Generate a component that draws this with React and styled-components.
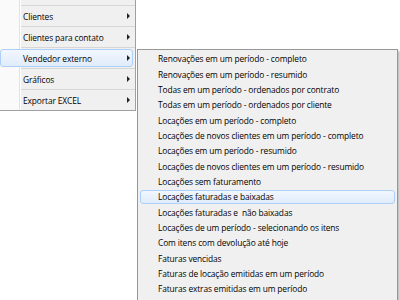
import React from "react";
import styled, { createGlobalStyle } from "styled-components";

const Global = createGlobalStyle`
  html, body { margin: 0; padding: 0; background: #ffffff; }
  body { font-family: "Open Sans", "Noto Sans", sans-serif; }
`;

const Screen = styled.div`
  width: 400px;
  height: 300px;
  overflow: hidden;
  display: flex;
  align-items: flex-start;
  background: #ffffff;
`;

const MainMenu = styled.div`
  width: 135px;
  border-right: 1px solid #a0a0a0;
  border-bottom: 1px solid #a0a0a0;
  background: linear-gradient(to right, #fafafa 0, #fafafa 19px, #e2e3e3 19px, #e2e3e3 20px, #ffffff 20px, #ffffff 21px, #f0f0f0 21px);
  display: flex;
  flex-direction: column;
`;

const TopStub = styled.div`
  height: 5px;
`;

const Sep = styled.div`
  height: 1px;
  margin-left: 21px;
  background: #d7d7d7;
`;

const MainItem = styled.div`
  height: 20px;
  display: flex;
  align-items: center;
  padding: 0 5px 0 23px;
  font-size: 8.4px;
  letter-spacing: -0.12px;
  color: #000;
  position: relative;
`;

const Highlight = styled.div`
  position: absolute;
  left: ${(p) => p.$left}px;
  right: ${(p) => p.$right}px;
  top: 1px;
  bottom: 1px;
  border: 1px solid #aecff7;
  border-radius: 3px;
  background: linear-gradient(to bottom, #f2f7fe, #e0ebfb);
`;

const Label = styled.span`
  position: relative;
  flex: 1;
  white-space: pre;
`;

const Arrow = styled.svg`
  position: relative;
  width: 3px;
  height: 6px;
  flex: none;
`;

const SubMenu = styled.div`
  margin-top: 49px;
  margin-left: 1px;
  width: 259px;
  height: 260px;
  border: 1px solid #979797;
  background: #f0f0f0;
  box-shadow: 2px 2px 2px rgba(0, 0, 0, 0.25);
  padding-top: 1.3px;
  display: flex;
  flex-direction: column;
`;

const SubItem = styled.div`
  height: 15.33px;
  flex: none;
  display: flex;
  align-items: center;
  padding-left: 20px;
  font-size: 8.4px;
  letter-spacing: -0.12px;
  color: #000;
  position: relative;
`;

const mainItems = [
  { label: "Clientes" },
  { label: "Clientes para contato" },
  { label: "Vendedor externo", active: true },
  { label: "Gráficos" },
  { label: "Exportar EXCEL" },
];

const subItems = [
  "Renovações em um período - completo",
  "Renovações em um período - resumido",
  "Todas em um período - ordenados por contrato",
  "Todas em um período - ordenados por cliente",
  "Locações em um período - completo",
  "Locações de novos clientes em um período - completo",
  "Locações em um período - resumido",
  "Locações de novos clientes em um período - resumido",
  "Locações sem faturamento",
  "Locações faturadas e baixadas",
  "Locações faturadas e  não baixadas",
  "Locações de um período - selecionando os itens",
  "Com itens com devolução até hoje",
  "Faturas vencidas",
  "Faturas de locação emitidas em um período",
  "Faturas extras emitidas em um período",
];

const ArrowIcon = () => (
  <Arrow viewBox="0 0 3 6">
    <polygon points="0,0 3,3 0,6" fill="#222" />
  </Arrow>
);

export default function App() {
  return (
    <>
      <Global />
      <Screen>
        <MainMenu>
          <TopStub />
          {mainItems.map((it) => (
            <React.Fragment key={it.label}>
              <Sep />
              <MainItem>
                {it.active && <Highlight $left={0} $right={2} />}
                <Label>{it.label}</Label>
                <ArrowIcon />
              </MainItem>
            </React.Fragment>
          ))}
        </MainMenu>
        <SubMenu>
          {subItems.map((s, i) => (
            <SubItem key={i}>
              {i === 9 && <Highlight $left={2} $right={2} />}
              <Label>{s}</Label>
            </SubItem>
          ))}
        </SubMenu>
      </Screen>
    </>
  );
}
